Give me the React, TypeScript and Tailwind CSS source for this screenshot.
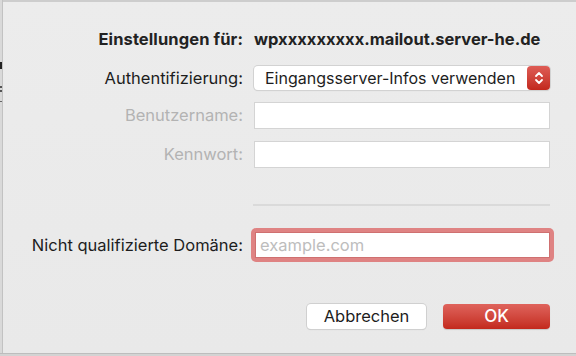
import React from "react";

export default function App() {
  const font = { fontFamily: "Inter, 'Helvetica Neue', Arial, sans-serif" };
  return (
    <div
      className="relative w-[576px] h-[356px] overflow-hidden bg-gradient-to-b from-[#ececec] to-[#e9e9e9] text-[#1d1d1d]"
      style={font}
    >
      {/* window chrome edges */}
      <div className="absolute left-0 top-0 w-full h-[2px] bg-[#cdcdcd]" />
      <div className="absolute left-0 top-0 h-full w-[2px] bg-[#d9d9d9]" />
      <div className="absolute left-[2px] top-0 h-full w-px bg-[#c2c2c2]" />
      <div className="absolute left-0 top-[62px] h-[7px] w-[2px] bg-[#222]" />
      <div className="absolute left-0 top-[86px] h-[2px] w-[2px] bg-[#555]" />
      <div className="absolute left-0 top-[90px] h-[2px] w-[2px] bg-[#555]" />
      <div className="absolute left-0 top-[101px] h-px w-[2px] bg-[#666]" />
      <div className="absolute left-0 bottom-[2px] w-full h-px bg-[#bdbdbd]" />
      <div className="absolute left-0 bottom-0 w-full h-[2px] bg-[#d3d3d3]" />

      <div className="flex flex-col pt-[28px]">
        <div className="grid grid-cols-[243px_296px] gap-x-[11px] items-center">
          {/* Title row */}
          <div className="h-[22px] flex items-center justify-end text-[16.5px] font-bold text-[#222] whitespace-nowrap tracking-[0.1px]">
            Einstellungen für:
          </div>
          <div className="h-[22px] flex items-center text-[16.5px] font-bold text-[#222] whitespace-nowrap">
            wpxxxxxxxxx.mailout.server-he.de
          </div>

          {/* Auth */}
          <div className="mt-[16px] h-[24px] flex items-center justify-end text-[16.5px] whitespace-nowrap">
            Authentifizierung:
          </div>
          <div className="mt-[16px] h-[24px] flex items-center rounded-[4px] bg-white shadow-[0_0_0_1px_#d2d2d2,0_1px_1px_rgba(0,0,0,0.12)] pl-[11px]">
            <span className="flex-1 text-[16px] whitespace-nowrap">Eingangsserver-Infos verwenden</span>
            <div className="w-[23px] h-[24px] rounded-[4px] bg-gradient-to-b from-[#de5c55] to-[#c2271c] flex items-center justify-center">
              <svg width="10" height="16" viewBox="0 0 10 16" fill="none" stroke="white" strokeWidth="1.8" strokeLinecap="round" strokeLinejoin="round">
                <path d="M2 6 L5 3 L8 6" />
                <path d="M2 10 L5 13 L8 10" />
              </svg>
            </div>
          </div>

          {/* Benutzername */}
          <div className="mt-[12px] h-[27px] flex items-center justify-end text-[16.5px] text-[#b3b3b3] whitespace-nowrap">
            Benutzername:
          </div>
          <div className="mt-[12px] h-[27px] bg-white border border-[#d4d4d4]" />

          {/* Kennwort */}
          <div className="mt-[12px] h-[27px] flex items-center justify-end text-[16.5px] text-[#b3b3b3] whitespace-nowrap">
            Kennwort:
          </div>
          <div className="mt-[12px] h-[27px] bg-white border border-[#d4d4d4]" />

          {/* Separator */}
          <div className="mt-[36px]" />
          <div className="mt-[36px] h-[2px] bg-[#dadada] -ml-[1px]" />

          {/* Domain */}
          <div className="mt-[22px] h-[34px] flex items-center justify-end text-[16.5px] whitespace-nowrap">
            Nicht qualifizierte Domäne:
          </div>
          <div className="mt-[22px] h-[34px] rounded-[5px] bg-[#df8383] p-[4px] -ml-[3px] -mr-[4px]">
            <div className="h-full bg-white flex items-center pl-[4px] text-[16.5px] text-[#bdbdbd] border border-[#cf7070]">
              example.com
            </div>
          </div>
        </div>

        {/* Buttons */}
        <div className="mt-[42px] flex justify-end pr-[26px] gap-[17px]">
          <button className="w-[119px] h-[25px] rounded-[4px] bg-white shadow-[0_0_0_1px_#d0d0d0,0_1px_1px_rgba(0,0,0,0.15)] text-[16.5px] text-[#1d1d1d] flex items-center justify-center">
            Abbrechen
          </button>
          <button className="w-[107px] h-[25px] rounded-[4px] bg-gradient-to-b from-[#df635c] to-[#c3281c] text-[17px] font-medium text-white flex items-center justify-center shadow-[0_1px_1px_rgba(0,0,0,0.15)]">
            OK
          </button>
        </div>
      </div>
    </div>
  );
}
